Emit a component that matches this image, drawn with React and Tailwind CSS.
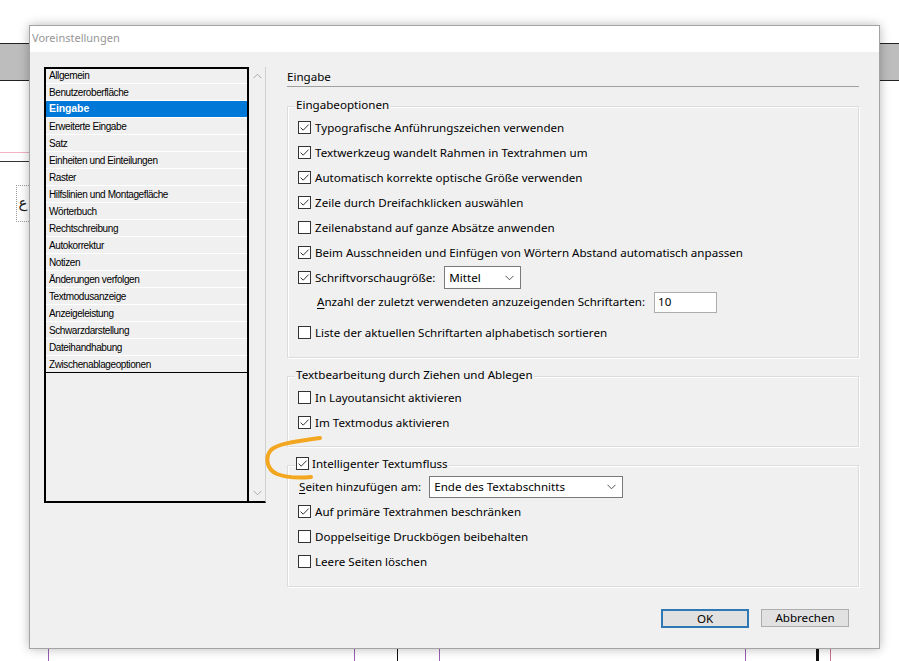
import React from "react";

const listItems = [
  "Allgemein",
  "Benutzeroberfläche",
  "Eingabe",
  "Erweiterte Eingabe",
  "Satz",
  "Einheiten und Einteilungen",
  "Raster",
  "Hilfslinien und Montagefläche",
  "Wörterbuch",
  "Rechtschreibung",
  "Autokorrektur",
  "Notizen",
  "Änderungen verfolgen",
  "Textmodusanzeige",
  "Anzeigeleistung",
  "Schwarzdarstellung",
  "Dateihandhabung",
  "Zwischenablageoptionen",
];

function Box({ checked }) {
  return (
    <span className="w-[13px] h-[13px] border border-[#333] bg-white flex items-center justify-center shrink-0">
      {checked && (
        <svg width="11" height="11" viewBox="0 0 11 11">
          <path d="M1.6 5.6 L4.2 8.2 L9.6 2.6" fill="none" stroke="#333" strokeWidth="1" />
        </svg>
      )}
    </span>
  );
}

function CheckRow({ checked, children }) {
  return (
    <div className="h-[25px] flex items-center gap-[4px]">
      <Box checked={checked} />
      <span>{children}</span>
    </div>
  );
}

function Chevron() {
  return (
    <svg width="9" height="6" viewBox="0 0 9 6">
      <polyline points="0.5,0.8 4.5,4.8 8.5,0.8" fill="none" stroke="#555" strokeWidth="1" />
    </svg>
  );
}

function Group({ legend, children }) {
  return (
    <div className="relative border border-[#dcdcdc] shadow-[inset_1px_1px_0_#fff,1px_1px_0_#fff] pl-[10px]">
      <div className="absolute left-[7px] top-[-12px] bg-[#f0f0f0] px-[1px] h-[20px] flex items-center">
        {legend}
      </div>
      {children}
    </div>
  );
}

export default function App() {
  return (
    <div className="relative w-[899px] h-[661px] bg-white overflow-hidden font-['Noto_Sans',sans-serif] text-[11.6px] text-black">
      {/* background desktop content */}
      <div className="absolute left-0 top-[43px] w-[899px] h-[38px] bg-[#bdbdbd] border-y border-[#222]" />
      <div className="absolute left-0 top-[152px] w-[29px] h-px bg-[#f2b3c2]" />
      <div className="absolute left-0 top-[161px] w-[29px] h-px bg-[#333]" />
      <div className="absolute left-[16px] top-[185px] w-[13px] h-[37px] border border-dotted border-[#9a9a9a] border-r-0 flex items-center justify-center overflow-hidden">
        <span className="font-['DejaVu_Sans',sans-serif] text-[15px] leading-none text-[#222]">ع</span>
      </div>
      <div className="absolute left-[48px] top-[648px] w-px h-[13px] bg-[#9b5fb4]" />
      <div className="absolute left-[354px] top-[648px] w-px h-[13px] bg-[#9b5fb4]" />
      <div className="absolute left-[397px] top-[648px] w-px h-[13px] bg-[#111]" />
      <div className="absolute left-[439px] top-[648px] w-px h-[13px] bg-[#9b5fb4]" />
      <div className="absolute left-[745px] top-[648px] w-px h-[13px] bg-[#9b5fb4]" />
      <div className="absolute left-[816px] top-[648px] w-[3px] h-[13px] bg-[#111]" />
      <div className="absolute left-[830px] top-[648px] w-px h-[13px] bg-[#c9708a]" />

      {/* dialog window */}
      <div className="absolute left-[29px] top-[25px] w-[851px] h-[624px] border border-[#a3a3a3] bg-[#f0f0f0] shadow-[0_0_10px_rgba(0,0,0,0.28)] flex flex-col">
        <div className="h-[26px] bg-white flex items-center pl-[2px] pb-[1px] text-[#969696] text-[11px]">
          Voreinstellungen
        </div>
        <div className="flex pl-[14px] pt-[15px]">
          {/* category list */}
          <div className="flex h-[436px] w-[222px] shrink-0">
            <div className="w-[205px] h-full border-2 border-black overflow-hidden font-['Liberation_Sans',sans-serif] text-[10px] tracking-[-0.4px]">
              {listItems.map((item, i) => (
                <div
                  key={item}
                  className={
                    (i === 0 ? "-mt-[2px] " : "") +
                    (i === 2 ? "bg-[#0078d7] text-white font-bold tracking-[-0.1px] text-[10.5px] " : "") +
                    (i === 17 ? "border-b border-black " : "border-b border-white ") +
                    "h-[17px] flex items-center pl-[3px]"
                  }
                >
                  {item}
                </div>
              ))}
            </div>
            <div className="w-[17px] h-full border-r border-[#d0d0d0] border-b-2 border-b-black flex flex-col items-center justify-between pt-[6px] pb-[5px]">
              <svg width="9" height="6" viewBox="0 0 9 6">
                <polyline points="0.5,5.2 4.5,1.2 8.5,5.2" fill="none" stroke="#a8a8a8" strokeWidth="1" />
              </svg>
              <svg width="9" height="6" viewBox="0 0 9 6">
                <polyline points="0.5,0.8 4.5,4.8 8.5,0.8" fill="none" stroke="#a8a8a8" strokeWidth="1" />
              </svg>
            </div>
          </div>

          {/* right panel */}
          <div className="ml-[21px] w-[572px] flex flex-col">
            <div className="h-[20px] border-b border-[#a0a0a0] flex items-center">Eingabe</div>

            <div className="mt-[19px]">
              <Group legend={<span>Eingabeoptionen</span>}>
                <div className="pt-[8px] pb-[12px]">
                  <CheckRow checked>Typografische Anführungszeichen verwenden</CheckRow>
                  <CheckRow checked>Textwerkzeug wandelt Rahmen in Textrahmen um</CheckRow>
                  <CheckRow checked>Automatisch korrekte optische Größe verwenden</CheckRow>
                  <CheckRow checked>Zeile durch Dreifachklicken auswählen</CheckRow>
                  <CheckRow>Zeilenabstand auf ganze Absätze anwenden</CheckRow>
                  <CheckRow checked>Beim Ausschneiden und Einfügen von Wörtern Abstand automatisch anpassen</CheckRow>
                  <div className="h-[25px] flex items-center gap-[4px]">
                    <Box checked />
                    <span>Schriftvorschaugröße:</span>
                    <div className="ml-[5px] w-[77px] h-[23px] bg-white border border-[#7a7a7a] flex items-center justify-between pl-[4px] pr-[6px]">
                      <span>Mittel</span>
                      <Chevron />
                    </div>
                  </div>
                  <div className="h-[24px] flex items-center ml-[19px] gap-[9px]">
                    <span>
                      <span className="underline underline-offset-2">A</span>nzahl der zuletzt verwendeten anzuzeigenden Schriftarten:
                    </span>
                    <div className="w-[63px] h-[21px] bg-white border border-[#adadad] flex items-center pl-[3px]">10</div>
                  </div>
                  <div className="mt-[6px]">
                    <CheckRow>Liste der aktuellen Schriftarten alphabetisch sortieren</CheckRow>
                  </div>
                </div>
              </Group>
            </div>

            <div className="mt-[18px]">
              <Group legend={<span>Textbearbeitung durch Ziehen und Ablegen</span>}>
                <div className="pt-[8px] pb-[11px]">
                  <CheckRow>In Layoutansicht aktivieren</CheckRow>
                  <CheckRow checked>Im Textmodus aktivieren</CheckRow>
                </div>
              </Group>
            </div>

            <div className="mt-[18px]">
              <Group
                legend={
                  <span className="flex items-center gap-[3px]">
                    <Box checked />
                    <span>Intelligenter Textumfluss</span>
                  </span>
                }
              >
                <div className="pt-[8px] pb-[12px]">
                  <div className="h-[25px] flex items-center ml-[1px] gap-[8px]">
                    <span>
                      <span className="underline underline-offset-2">S</span>eiten hinzufügen am:
                    </span>
                    <div className="w-[194px] h-[22px] bg-white border border-[#7a7a7a] flex items-center justify-between pl-[4px] pr-[6px]">
                      <span>Ende des Textabschnitts</span>
                      <Chevron />
                    </div>
                  </div>
                  <CheckRow checked>Auf primäre Textrahmen beschränken</CheckRow>
                  <CheckRow>Doppelseitige Druckbögen beibehalten</CheckRow>
                  <CheckRow>Leere Seiten löschen</CheckRow>
                </div>
              </Group>
            </div>

            <div className="mt-[22px] flex justify-end gap-[12px] pr-[10px]">
              <div className="w-[88px] h-[19px] border-2 border-[#2f78b4] bg-[#e1e1e1] flex items-center justify-center">OK</div>
              <div className="w-[88px] h-[18px] border border-[#adadad] bg-[#e1e1e1] flex items-center justify-center">Abbrechen</div>
            </div>
          </div>
        </div>
      </div>

      {/* orange annotation */}
      <svg className="absolute left-0 top-0 pointer-events-none" width="899" height="661" viewBox="0 0 899 661">
        <path
          d="M320 438 C300 441 278 443 271 450 C265 457 266 469 277 474 C287 478 300 478 311 477"
          fill="none"
          stroke="#f3a61f"
          strokeWidth="4"
          strokeLinecap="round"
        />
      </svg>
    </div>
  );
}
